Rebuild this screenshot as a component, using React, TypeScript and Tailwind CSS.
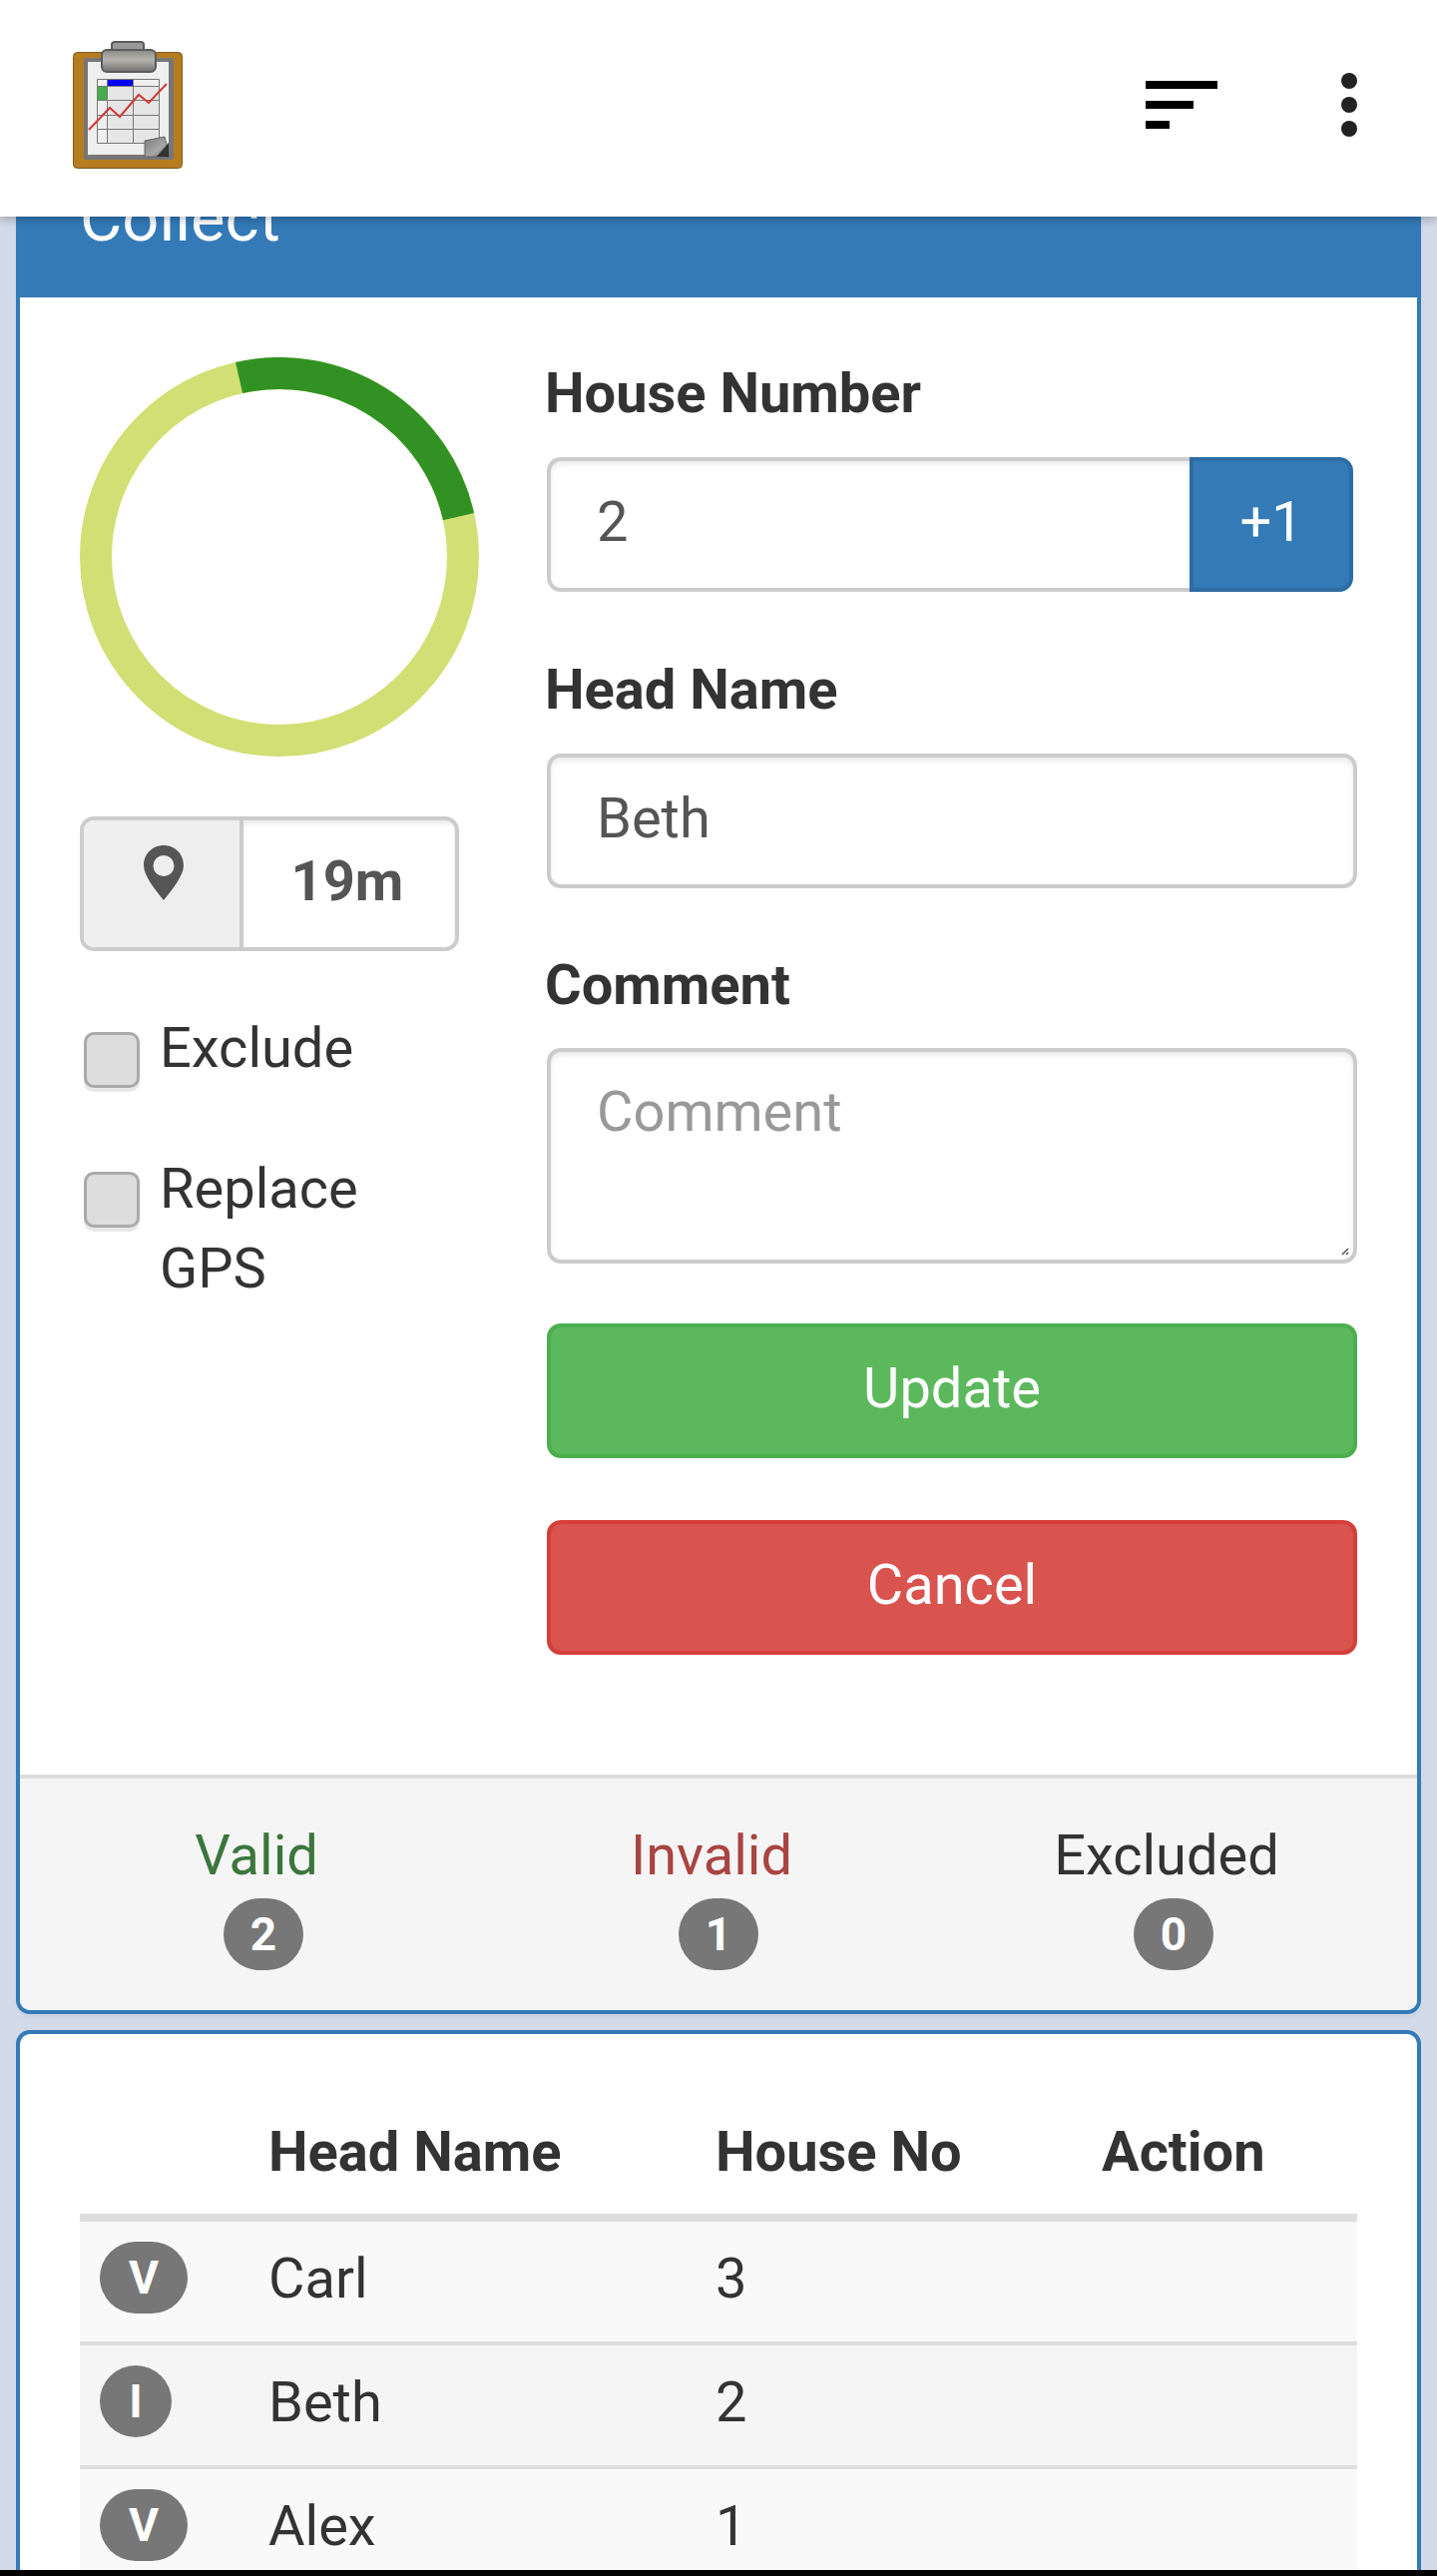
const logo = (
  <svg viewBox="60 30 140 150" className="absolute left-[60px] top-[30px] h-[150px] w-[140px]">
    <defs>
      <linearGradient id="clip" x1="0" y1="0" x2="0" y2="1">
        <stop offset="0" stopColor="#8a8a8a" />
        <stop offset="0.45" stopColor="#b5b3ad" />
        <stop offset="1" stopColor="#6e6e6e" />
      </linearGradient>
      <linearGradient id="curl" x1="0" y1="0" x2="1" y2="1">
        <stop offset="0" stopColor="#7c7c7c" />
        <stop offset="0.6" stopColor="#a8a8a8" />
        <stop offset="1" stopColor="#555" />
      </linearGradient>
    </defs>
    <rect x="73.5" y="52.500" width="109" height="116" rx="4" fill="#b67c20" stroke="#7d5a1c" />
    <rect x="84" y="58" width="90" height="102" rx="2" fill="#777" />
    <rect x="88" y="62" width="81" height="93" fill="#efefef" />
    <rect x="107" y="86" width="52" height="57" fill="#e6e6e6" />
    <path
      d="M97.500 79.500H159.500V143.500H97.500ZM97.500 86.500H159.500M97.500 100.500H159.500M97.500 115.500H159.500M97.500 129.500H159.500M107.500 79.500V143.500M133.500 79.500V143.500"
      stroke="#777"
      fill="none"
    />
    <rect x="108" y="80" width="25" height="6" fill="#0000f0" />
    <rect x="98" y="87" width="9" height="13" fill="#45ad4c" />
    <path d="M89 130 110 108 120 117 139 95 149 103 167 84" fill="none" stroke="#d23a35" strokeWidth="2" />
    <path d="M145 141 165 137 170 157H145Z" fill="url(#curl)" stroke="#666" />
    <path d="M157 157 169 143V157Z" fill="#333" />
    <rect x="112" y="42" width="32" height="16" rx="3" fill="#9a9a9a" stroke="#5c5c5c" strokeWidth="2" />
    <rect x="102" y="50" width="54" height="22" rx="5" fill="url(#clip)" stroke="#5c5c5c" strokeWidth="2" />
  </svg>
);

const Badge = ({ text, width }: { text: string; width: string }) => (
  <span className={`flex h-[72px] items-center justify-center rounded-[36px] bg-[#777] text-[46px] font-bold text-white ${width}`}>
    {text}
  </span>
);

const rows = [
  { status: "V", width: "w-[88px]", name: "Carl", house: "3", bg: "bg-[#f9f9f9]" },
  { status: "I", width: "w-[72px]", name: "Beth", house: "2", bg: "bg-[#f5f5f5]" },
  { status: "V", width: "w-[88px]", name: "Alex", house: "1", bg: "bg-[#f9f9f9]" },
];

const inputCls = "shadow-[inset_0_4px_4px_rgba(0,0,0,0.075)]";

export default function App() {
  return (
    <div className="relative h-[2581px] overflow-hidden bg-[#d3dae8] font-['Roboto',sans-serif] text-[56px] leading-[80px] text-[#333]">
      {/* top bar */}
      <header className="absolute inset-x-0 top-0 z-10 h-[217px] bg-white shadow-[0_3px_9px_rgba(0,0,0,0.25)]">
        {logo}
        <div className="absolute left-[1148px] top-[81px] flex w-[72px] flex-col gap-3">
          <div className="h-2 w-[72px] bg-black"></div>
          <div className="h-2 w-12 bg-black"></div>
          <div className="h-2 w-6 bg-black"></div>
        </div>
        <div className="absolute left-[1344px] top-[73px] flex flex-col gap-2">
          <div className="h-4 w-4 rounded-full bg-[#222]"></div>
          <div className="h-4 w-4 rounded-full bg-[#222]"></div>
          <div className="h-4 w-4 rounded-full bg-[#222]"></div>
        </div>
      </header>

      <div className="flex flex-col gap-4 px-4 pt-[100px]">
        {/* Collect panel */}
        <section className="overflow-hidden rounded-[14px] border-4 border-[#337ab7] bg-white shadow-[0_4px_4px_rgba(0,0,0,0.03)]">
          <div className="h-[194px] bg-[#337ab7] pl-[60px] pt-[70px] text-[65px] leading-[90px] text-white">Collect</div>

          <div className="flex h-[1480px] px-[60px]">
            {/* left column */}
            <div className="w-[468px] shrink-0 pt-[60px]">
              <svg viewBox="0 0 400 400" className="h-[400px] w-[400px]">
                <circle cx="200" cy="200" r="184" fill="none" stroke="#d2df75" strokeWidth="32" />
                <circle
                  cx="200"
                  cy="200"
                  r="184"
                  fill="none"
                  stroke="#319223"
                  strokeWidth="32"
                  strokeDasharray="289 867"
                  transform="rotate(-102.7 200 200)"
                />
              </svg>
              <div className="mt-[60px] flex h-[135px] w-[380px] overflow-hidden rounded-[14px] border-4 border-[#ccc]">
                <div className="flex w-40 justify-center border-r-4 border-[#ccc] bg-[#eee] pl-1 pt-[25px] text-[#555]">
                  <svg viewBox="0 0 40 55" className="h-[55px] w-10">
                    <path
                      fillRule="evenodd"
                      d="M20 0C9 0 0 8.500 0 20 0 30 11 44 20 55 29 44 40 30 40 20 40 8.500 31 0 20 0ZM20 10A10.500 10.500 0 1 1 20 31 10.500 10.500 0 0 1 20 10Z"
                      fill="currentColor"
                    />
                  </svg>
                </div>
                <div className={`flex flex-1 items-center justify-center pb-[5px] pr-1 font-bold text-[#555] ${inputCls}`}>19m</div>
              </div>
              <div className="ml-1 mt-[81px] flex gap-5">
                <div className="h-14 w-14 shrink-0 rounded-[10px] border-[3px] border-[#aaa] bg-[#ddd] shadow-[0_4px_0_#e8e8e8]"></div>
                <span className="-mt-6">Exclude</span>
              </div>
              <div className="ml-1 mt-[84px] flex gap-5">
                <div className="h-14 w-14 shrink-0 rounded-[10px] border-[3px] border-[#aaa] bg-[#ddd] shadow-[0_4px_0_#e8e8e8]"></div>
                <span className="-mt-[23px] w-[230px]">Replace GPS</span>
              </div>
            </div>

            {/* form column */}
            <div className="flex-1 pt-14">
              <div className="-ml-0.5 font-bold">House Number</div>
              <div className="mt-6 flex h-[135px] w-[808px]">
                <div className={`flex flex-1 items-center rounded-l-[14px] border-4 border-r-0 border-[#ccc] pb-[5px] pl-[46px] text-[#555] ${inputCls}`}>2</div>
                <div className="flex w-[164px] items-center justify-center rounded-r-[14px] border-4 border-[#2e6da4] bg-[#337ab7] pb-[5px] text-white">+1</div>
              </div>
              <div className="-ml-0.5 mt-[58px] font-bold">Head Name</div>
              <div className={`mt-6 flex h-[135px] items-center rounded-[14px] border-4 border-[#ccc] pb-[5px] pl-[46px] text-[#555] ${inputCls}`}>Beth</div>
              <div className="-ml-0.5 mt-[57px] font-bold">Comment</div>
              <div className={`relative mt-[23px] h-[216px] rounded-[14px] border-4 border-[#ccc] pl-[46px] pt-5 text-[#999] ${inputCls}`}>
                Comment
                <svg viewBox="0 0 8 8" className="absolute bottom-1 right-1 h-2 w-2">
                  <path d="M1 7 7 1M5 7 7 5" stroke="#555" strokeWidth="1.500" />
                </svg>
              </div>
              <div className="mt-[60px] flex h-[135px] items-center justify-center rounded-[14px] border-4 border-[#4cae4c] bg-[#5cb85c] pb-[5px] text-white">Update</div>
              <div className="mt-[62px] flex h-[135px] items-center justify-center rounded-[14px] border-4 border-[#d43f3a] bg-[#d9534f] pb-[5px] text-white">Cancel</div>
            </div>
          </div>

          {/* counts */}
          <div className="flex h-[236px] border-t-4 border-[#ddd] bg-[#f5f5f5] px-4 pt-[37px]">
            {[
              { label: "Valid", count: "2", color: "text-[#3c763d]" },
              { label: "Invalid", count: "1", color: "text-[#a94442]" },
              { label: "Excluded", count: "0", color: "text-[#333]" },
            ].map((c) => (
              <div key={c.label} className="flex flex-1 flex-col items-center">
                <span className={`pr-[14px] ${c.color}`}>{c.label}</span>
                <div className="mt-[3px]">
                  <Badge text={c.count} width="w-20" />
                </div>
              </div>
            ))}
          </div>
        </section>

        {/* entries panel */}
        <section className="rounded-[14px] border-4 border-[#337ab7] bg-white px-[60px] pt-[52px]">
          <table className="w-full table-fixed border-separate border-spacing-0 text-left">
            <thead>
              <tr className="font-bold">
                <th className="h-[136px] w-[189px] border-b-8 border-[#ddd]"></th>
                <th className="w-[448px] border-b-8 border-[#ddd] pb-[22px] align-bottom">Head Name</th>
                <th className="w-[387px] border-b-8 border-[#ddd] pb-[22px] align-bottom">House No</th>
                <th className="border-b-8 border-[#ddd] pb-[22px] align-bottom">Action</th>
              </tr>
            </thead>
            <tbody>
              {rows.map((r) => (
                <tr key={r.name} className={r.bg}>
                  <td className="h-[124px] border-b-4 border-[#ddd] pl-5 pt-5 align-top">
                    <Badge text={r.status} width={r.width} />
                  </td>
                  <td className="border-b-4 border-[#ddd] pt-[17px] align-top">{r.name}</td>
                  <td className="border-b-4 border-[#ddd] pt-[17px] align-top">{r.house}</td>
                  <td className="border-b-4 border-[#ddd]"></td>
                </tr>
              ))}
            </tbody>
          </table>
        </section>
      </div>

      {/* phone nav edge */}
      <div className="absolute inset-x-0 bottom-0 z-10 h-1.5 bg-black"></div>
    </div>
  );
}
